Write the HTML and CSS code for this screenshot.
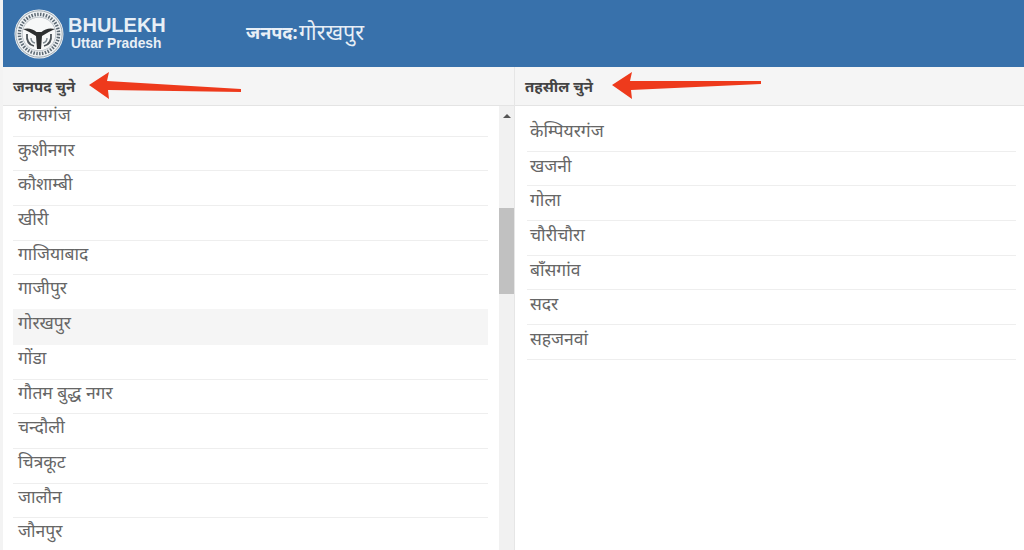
FILE: index.html
```html
<!DOCTYPE html>
<html lang="hi">
<head>
    <meta charset="UTF-8">
    <title>Bhulekh Uttar Pradesh</title>
    <link rel="stylesheet" href="styles.css">
</head>
<body>
    <header class="topbar">
        <div class="brand">
            <svg class="emblem" viewBox="0 0 50 50" width="50" height="50">
                <circle cx="25" cy="25" r="24.5" fill="#eef1f3"/>
                <circle cx="25" cy="25" r="23.2" fill="none" stroke="#8d9aa3" stroke-width="0.8"/>
                <circle cx="25" cy="25" r="19.6" fill="none" stroke="#5d6a74" stroke-width="3.4" stroke-dasharray="1.5 1.4"/>
                <circle cx="25" cy="25" r="16.8" fill="#f7f8f8" stroke="#9aa5ac" stroke-width="0.6"/>
                <path d="M9 20 Q17 18 22.5 23 L27.5 23 Q33 18 41 20 Q34 23 28 27 L27 40 L23 40 L22 27 Q16 23 9 20Z" fill="#2d2f30"/>
                <path d="M13 25 Q12 35 20 37 M37 25 Q38 35 30 37" fill="none" stroke="#4b5257" stroke-width="1.8"/>
                <path d="M17 29 Q17 33 21 34 M33 29 Q33 33 29 34" fill="none" stroke="#7f8a91" stroke-width="1.4"/>
            </svg>
            <div class="brand-text">
                <div class="brand-name">BHULEKH</div>
                <div class="brand-state">Uttar Pradesh</div>
            </div>
        </div>
        <div class="district"><b>जनपद:</b> गोरखपुर</div>
    </header>

    <div class="columns">
        <section class="col col-left">
            <div class="col-head">
                <span>जनपद चुने</span>
                <svg class="arrow" viewBox="0 0 154 28" width="154" height="28">
                    <path d="M0 13 L20 0 L18 9 L152 17 L152 20 L19 18 L20 27Z" fill="#ee3a1c"/>
                </svg>
            </div>
            <div class="list-wrap">
                <ul class="list list-scrolled">
                    <li>कासगंज</li>
                    <li>कुशीनगर</li>
                    <li>कौशाम्बी</li>
                    <li>खीरी</li>
                    <li>गाजियाबाद</li>
                    <li>गाजीपुर</li>
                    <li class="active">गोरखपुर</li>
                    <li>गोंडा</li>
                    <li>गौतम बुद्ध नगर</li>
                    <li>चन्दौली</li>
                    <li>चित्रकूट</li>
                    <li>जालौन</li>
                    <li>जौनपुर</li>
                </ul>
                <div class="scrollbar">
                    <span class="scroll-up"></span>
                    <span class="scroll-thumb"></span>
                </div>
            </div>
        </section>
        <section class="col col-right">
            <div class="col-head">
                <span>तहसील चुने</span>
                <svg class="arrow" viewBox="0 0 154 28" width="154" height="28">
                    <path d="M0 13 L20 0 L18 9 L149 9 L149 12 L19 18 L20 27Z" fill="#ee3a1c"/>
                </svg>
            </div>
            <ul class="list list-right">
                <li>केम्पियरगंज</li>
                <li>खजनी</li>
                <li>गोला</li>
                <li>चौरीचौरा</li>
                <li>बाँसगांव</li>
                <li>सदर</li>
                <li>सहजनवां</li>
            </ul>
        </section>
    </div>
</body>
</html>
```
FILE: styles.css
```css
* {
    margin: 0;
    padding: 0;
    box-sizing: border-box;
}
html, body {
    height: 550px;
    overflow: hidden;
}
body {
    font-family: "Noto Sans", "Liberation Sans", sans-serif;
    color: #666;
    padding-left: 3px;
    background: #f3f3f3;
}
.topbar {
    height: 67px;
    background-color: #3871ab;
    display: flex;
    align-items: center;
    padding-left: 11px;
    color: #fff;
}
.brand {
    display: flex;
    align-items: center;
    gap: 4px;
    width: 232px;
}
.brand-text {
    font-family: "Liberation Sans", sans-serif;
    font-weight: 700;
    color: #e8eff6;
    margin-top: -3px;
}
.brand-name {
    font-size: 20px;
    line-height: 22px;
}
.brand-state {
    font-size: 13.8px;
    line-height: 15px;
    padding-left: 3px;
}
.district {
    font-size: 21.5px;
    color: #e8eff6;
    margin-top: -4px;
    display: flex;
    align-items: center;
}
.district b {
    font-size: 18px;
    width: 53px;
}
.columns {
    display: flex;
    height: 483px;
    background-color: #fff;
}
.col {
    display: flex;
    flex-direction: column;
}
.col-left {
    width: 512px;
    border-right: 1px solid #e6e6e6;
}
.col-right {
    flex: 1;
}
.col-head {
    height: 39px;
    flex: none;
    background-color: #f5f5f5;
    border-bottom: 1px solid #e4e4e4;
    display: flex;
    align-items: center;
    gap: 14px;
    padding-left: 10px;
    font-size: 15px;
    font-weight: 700;
    color: #444;
}
.col-right .col-head {
    gap: 19px;
}
.arrow {
    flex: none;
}
.list-wrap {
    flex: 1;
    display: flex;
    overflow: hidden;
}
.list {
    list-style: none;
    font-size: 17.5px;
}
.list li {
    height: 34.7px;
    line-height: 25px;
    padding-left: 5px;
    border-bottom: 1px solid #eee;
}
.list-scrolled {
    width: 475px;
    margin: -4px 0 0 10px;
    flex: none;
}
.list .active {
    background-color: #f5f5f5;
    border-bottom-color: #f5f5f5;
    box-shadow: 0 -1px 0 #f5f5f5;
}
.list-right {
    margin: 11px 8px 0 12px;
}
.list-right li {
    padding-left: 3px;
    line-height: 26px;
}
.scrollbar {
    width: 15px;
    margin-left: 11px;
    background-color: #f1f1f1;
    position: relative;
}
.scroll-up {
    position: absolute;
    top: 8px;
    left: 4px;
    border: 4px solid transparent;
    border-top: 0;
    border-bottom: 4px solid #555;
}
.scroll-thumb {
    position: absolute;
    top: 102px;
    left: 0;
    width: 100%;
    height: 86px;
    background-color: #c1c1c1;
}
```
